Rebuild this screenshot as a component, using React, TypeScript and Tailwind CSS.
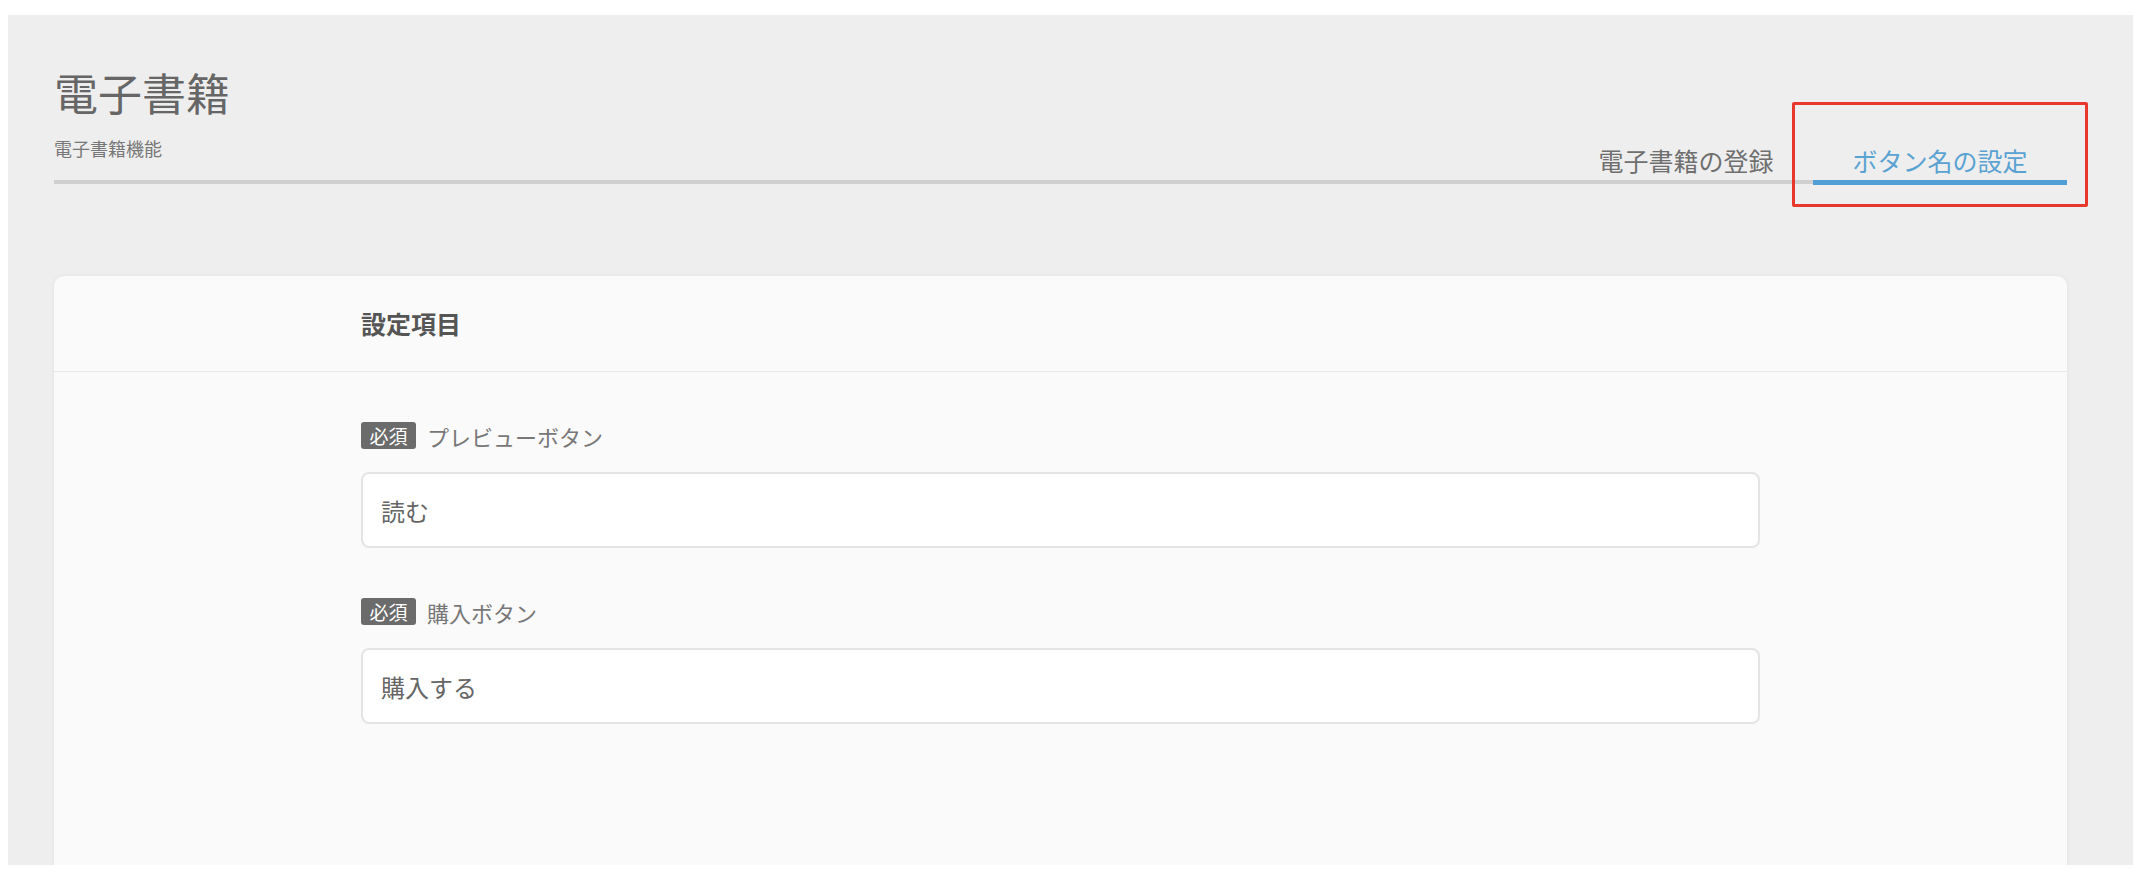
import React from 'react';

const fields = [
  { label: 'プレビューボタン', value: '読む' },
  { label: '購入ボタン', value: '購入する' },
];

const tabs = [
  { name: '電子書籍の登録', active: false },
  { name: 'ボタン名の設定', active: true },
];

export default function App() {
  return (
    <div className="min-h-screen bg-white pt-[15px] pl-[8px] pr-[15px] font-['Noto_Sans_CJK_JP','Noto_Sans',sans-serif]">
      <div className="h-[850px] overflow-hidden bg-[#eeeeee] pt-[55px] pl-[46px] pr-[66px]">
        {/* page header */}
        <div className="flex items-end">
          <div className="flex-1 border-b-4 border-[#cfcfcf] pb-[23px]">
            <h1 className="text-[44px] leading-[44px] font-normal text-[#666666]">電子書籍</h1>
            <p className="mt-[25px] text-[18px] leading-[18px] text-[#777777]">電子書籍機能</p>
          </div>
          {tabs.map(t => (
            <div
              key={t.name}
              className={`relative w-[254px] text-center text-[25px] leading-[36px] pb-[2px] ${
                t.active
                  ? 'border-b-[5px] border-[#4f9fd6] text-[#5aa2d2] -mb-px'
                  : 'border-b-4 border-[#cfcfcf] text-[#6f6f6f]'
              }`}
            >
              {t.name}
              {t.active && (
                <div className="absolute top-[-40px] bottom-[-27px] left-[-21px] right-[-21px] border-[3px] border-[#e8372c] rounded-[2px] pointer-events-none"></div>
              )}
            </div>
          ))}
        </div>

        {/* settings card */}
        <div className="mt-[92px] h-[700px] rounded-[10px] bg-[#fafafa] shadow-[0_0_4px_rgba(0,0,0,0.06)]">
          <div className="h-[96px] flex items-center border-b border-[#e8e8e8] pl-[307px]">
            <h2 className="text-[25px] font-bold text-[#555555]">設定項目</h2>
          </div>
          <div className="px-[307px] pt-[50px] flex flex-col gap-[50px]">
            {fields.map(f => (
              <div key={f.label}>
                <div className="flex items-center h-[27px]">
                  <span className="h-[27px] w-[55px] flex items-center justify-center rounded-[3px] bg-[#6b6b6b] text-white text-[19px] leading-none">
                    必須
                  </span>
                  <span className="ml-[11px] text-[22px] leading-none text-[#777777]">{f.label}</span>
                </div>
                <input
                  readOnly
                  defaultValue={f.value}
                  className="mt-[23px] block w-full h-[76px] rounded-lg border-2 border-[#e4e4e4] bg-white pl-[18px] text-[24px] text-[#666666] outline-none"
                />
              </div>
            ))}
          </div>
        </div>
      </div>
    </div>
  );
}
